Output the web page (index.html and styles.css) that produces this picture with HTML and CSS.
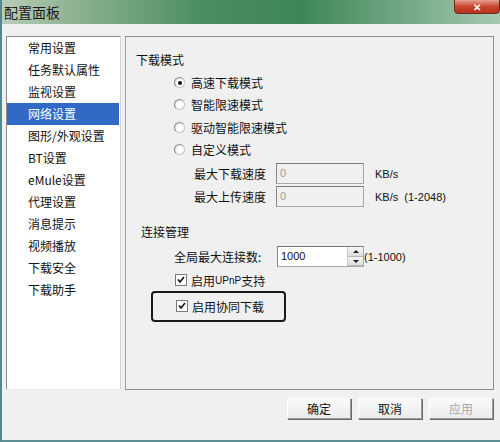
FILE: index.html
```html
<!DOCTYPE html>
<html lang="zh-CN">
<head>
  <meta charset="UTF-8">
  <title>配置面板</title>
  <link rel="stylesheet" href="styles.css">
</head>
<body>
  <div class="window">
    <header class="titlebar">
      <span class="title">配置面板</span>
      <span class="close">&#x2715;</span>
    </header>

    <div class="client">
      <div class="main">
        <!-- 左侧分类列表 -->
        <ul class="nav">
          <li>常用设置</li>
          <li>任务默认属性</li>
          <li>监视设置</li>
          <li class="active">网络设置</li>
          <li>图形/外观设置</li>
          <li>BT设置</li>
          <li>eMule设置</li>
          <li>代理设置</li>
          <li>消息提示</li>
          <li>视频播放</li>
          <li>下载安全</li>
          <li>下载助手</li>
        </ul>

        <!-- 右侧设置面板 -->
        <section class="panel">
          <h3 class="group">下载模式</h3>
          <div class="options">
            <label class="opt"><span class="radio checked"></span>高速下载模式</label>
            <label class="opt"><span class="radio"></span>智能限速模式</label>
            <label class="opt"><span class="radio"></span>驱动智能限速模式</label>
            <label class="opt"><span class="radio"></span>自定义模式</label>
          </div>
          <div class="speed">
            <div class="field">
              <span class="field-label">最大下载速度</span>
              <span class="input disabled">0</span>
              <span class="unit">KB/s</span>
            </div>
            <div class="field">
              <span class="field-label">最大上传速度</span>
              <span class="input disabled">0</span>
              <span class="unit">KB/s&nbsp; (1-2048)</span>
            </div>
          </div>

          <h3 class="group group-conn">连接管理</h3>
          <div class="conn">
            <div class="field">
              <span class="field-label">全局最大连接数:</span>
              <span class="input spin">1000<span class="spinner"><i class="up"></i><i class="down"></i></span></span>
              <span class="range">(1-1000)</span>
            </div>
            <label class="check-row"><span class="check"></span>启用<span class="small">UPnP</span>支持</label>
            <div class="mark">
              <label class="check-row"><span class="check"></span>启用协同下载</label>
            </div>
          </div>
        </section>
      </div>

      <footer class="buttons">
        <button class="btn">确定</button>
        <button class="btn">取消</button>
        <button class="btn faded">应用</button>
      </footer>
    </div>
  </div>
</body>
</html>
```

FILE: styles.css
```css
* {
  box-sizing: border-box;
}

body {
  margin: 0;
  width: 500px;
  height: 442px;
  overflow: hidden;
  font-family: "Noto Sans CJK SC", "Liberation Sans", sans-serif;
  font-size: 12px;
  color: #111;
  background: #f0f0f0;
}

.window {
  height: 442px;
  border-left: 2px solid #4f8a8e;
  border-bottom: 2px solid #5d8f92;
  display: flex;
  flex-direction: column;
  background: #f0f0f0;
}

.titlebar {
  height: 24px;
  display: flex;
  align-items: center;
  justify-content: space-between;
  background: linear-gradient(90deg, #b9cdb9 0%, #8fb393 14%, #4c8d62 40%, #3f8558 60%, #6fa783 80%, #a7c9b0 100%);
  position: relative;
}

.title {
  padding-left: 2px;
  font-size: 14px;
  color: #1b1b1b;
  margin-top: 0;
}

.close {
  position: absolute;
  top: -1px;
  right: 0;
  width: 46px;
  height: 15px;
  border: 1px solid #6a2a22;
  border-radius: 0 0 4px 4px;
  background: linear-gradient(#e8a090, #c8452e 50%, #b9321c);
  color: #fff;
  font-size: 10px;
  font-weight: bold;
  line-height: 13px;
  text-align: center;
}

.client {
  flex: 1;
  padding: 12px 6px 0 4px;
  display: flex;
  flex-direction: column;
}

.main {
  display: flex;
  gap: 4px;
  height: 354px;
}

.nav {
  list-style: none;
  margin: 0;
  padding: 0;
  width: 115px;
  background: #fff;
  border: 1px solid #8e8e8e;
  border-right-color: #d6d6d6;
  border-bottom-color: #ececec;
}

.nav li {
  height: 22px;
  line-height: 22px;
  padding-left: 21px;
  margin-right: 1px;
  white-space: nowrap;
}

.nav li.active {
  background: #3169c6;
  color: #fff;
}

.panel {
  flex: 1;
  border: 1px solid #8e8e8e;
  border-left-color: #a0a0a0;
  padding: 14px 0 0 10px;
}

.group {
  margin: 0;
  font-size: 12px;
  font-weight: normal;
  height: 18px;
  line-height: 18px;
}

.options {
  padding-left: 38px;
  margin-top: 2px;
}

.opt {
  display: flex;
  align-items: center;
  height: 22.5px;
}

.radio {
  width: 11px;
  height: 11px;
  border-radius: 50%;
  margin-right: 6px;
  background: radial-gradient(circle at 60% 60%, #fff 45%, #e4e4e4 70%);
  border: 1px solid #c4c4c4;
  border-top-color: #8a8a8a;
  border-left-color: #8a8a8a;
  position: relative;
}

.radio.checked::after {
  content: "";
  position: absolute;
  left: 3px;
  top: 3px;
  width: 4px;
  height: 4px;
  border-radius: 50%;
  background: #111;
}

.speed {
  padding-left: 58px;
  margin-top: 1px;
}

.field {
  display: flex;
  align-items: center;
  height: 23px;
}

.field-label {
  width: 82px;
}

.input {
  width: 88px;
  height: 21px;
  line-height: 19px;
  padding-left: 3px;
  border: 1px solid #a8a8a8;
  border-top-color: #7a7a7a;
  border-left-color: #888;
  font-family: "Liberation Sans", sans-serif;
  font-size: 11px;
}

.input.disabled {
  background: #f0f0f0;
  color: #9a9a9a;
}

.unit {
  margin-left: 11px;
  font-family: "Liberation Sans", sans-serif;
  font-size: 11px;
}

.group-conn {
  margin-top: 15px;
  padding-left: 5px;
}

.conn {
  padding-left: 38px;
  margin-top: 4px;
}

.conn .field-label {
  width: 103px;
}

.input.spin {
  position: relative;
  width: 87px;
  background: #fff;
  color: #111;
}

.spinner {
  position: absolute;
  right: 0;
  top: 0;
  width: 16px;
  height: 19px;
  display: flex;
  flex-direction: column;
  border-left: 1px solid #c8c8c8;
}

.spinner i {
  flex: 1;
  background: linear-gradient(#f6f6f6, #dcdcdc);
  border-bottom: 1px solid #b8b8b8;
  position: relative;
}

.spinner i::after {
  content: "";
  position: absolute;
  left: 5px;
  top: 3px;
  border-left: 3px solid transparent;
  border-right: 3px solid transparent;
}

.spinner .up::after {
  border-bottom: 3px solid #222;
}

.spinner .down::after {
  border-top: 3px solid #222;
}

.range {
  font-family: "Liberation Sans", sans-serif;
  font-size: 11px;
}

.check-row {
  display: flex;
  align-items: center;
  height: 24px;
  padding-left: 1px;
}

.check {
  width: 12px;
  height: 12px;
  margin-right: 4px;
  border: 1px solid #7a7a7a;
  background: #fff url("data:image/svg+xml,%3Csvg xmlns='http://www.w3.org/2000/svg' viewBox='0 0 10 10'%3E%3Cpath d='M2 4.5 L4 7 L8 2' fill='none' stroke='%23111' stroke-width='1.6'/%3E%3C/svg%3E") center / 10px 10px no-repeat;
}

.small {
  font-family: "Liberation Sans", sans-serif;
  font-size: 10px;
}

.mark {
  margin: -1px 0 0 -23px;
  width: 135px;
  height: 31px;
  border: 2px solid #1a1a1a;
  border-radius: 4px;
  padding: 1px 0 0 22px;
}

.buttons {
  display: flex;
  justify-content: flex-end;
  gap: 7px;
  margin-top: 8px;
  padding-right: 1px;
}

.btn {
  width: 64px;
  height: 21px;
  padding: 0;
  font-family: "Noto Sans CJK SC", sans-serif;
  font-size: 12px;
  color: #111;
  background: linear-gradient(#fafafa, #ececec);
  border: 1px solid #9a9a9a;
  border-top-color: #fff;
  border-left-color: #fff;
  box-shadow: 1px 1px 0 #6a6a6a;
}

.btn.faded {
  color: #a8a8a8;
}
```
